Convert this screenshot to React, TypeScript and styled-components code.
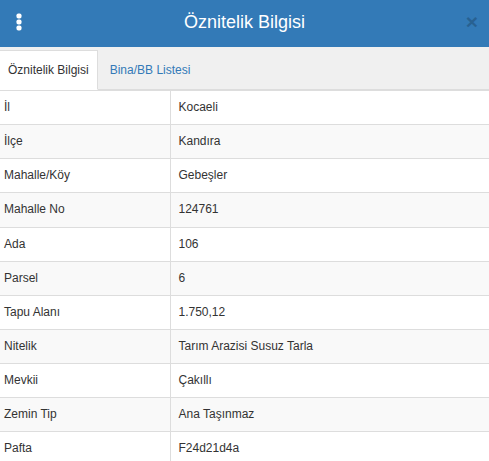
import { FC } from "react";
import styled, { createGlobalStyle } from "styled-components";

type Attribute = { label: string; value: string };

const attributes: Attribute[] = [
  { label: "İl", value: "Kocaeli" },
  { label: "İlçe", value: "Kandıra" },
  { label: "Mahalle/Köy", value: "Gebeşler" },
  { label: "Mahalle No", value: "124761" },
  { label: "Ada", value: "106" },
  { label: "Parsel", value: "6" },
  { label: "Tapu Alanı", value: "1.750,12" },
  { label: "Nitelik", value: "Tarım Arazisi Susuz Tarla" },
  { label: "Mevkii", value: "Çakıllı" },
  { label: "Zemin Tip", value: "Ana Taşınmaz" },
  { label: "Pafta", value: "F24d21d4a" },
];

const GlobalStyle = createGlobalStyle`
  body {
    margin: 0;
    font-family: "Liberation Sans", Arial, sans-serif;
    color: #333;
    background: #fff;
    overflow: hidden;
  }
`;

const App: FC = () => {
  return (
    <>
      <GlobalStyle />
      <StPanel>
        <StHeader>
          <StMenuButton aria-label="menu">
            <svg width="6" height="18" viewBox="0 0 6 18">
              <rect x="0.5" y="0.5" width="5" height="5" rx="1.8" fill="#fff" />
              <rect x="0.5" y="6.5" width="5" height="5" rx="1.8" fill="#fff" />
              <rect x="0.5" y="12.5" width="5" height="5" rx="1.8" fill="#fff" />
            </svg>
          </StMenuButton>
          <StTitle>Öznitelik Bilgisi</StTitle>
          <StClose aria-label="close">×</StClose>
        </StHeader>
        <StTabs>
          <StTab $active>Öznitelik Bilgisi</StTab>
          <StTab>Bina/BB Listesi</StTab>
        </StTabs>
        <StTable>
          <tbody>
            {attributes.map((row) => (
              <tr key={row.label}>
                <StLabelCell>{row.label}</StLabelCell>
                <StValueCell>{row.value}</StValueCell>
              </tr>
            ))}
          </tbody>
        </StTable>
      </StPanel>
    </>
  );
};

export default App;

const StPanel = styled.div`
  width: 489px;
  height: 461px;
  overflow: hidden;
  background: #fff;
`;

const StHeader = styled.div`
  display: grid;
  grid-template-columns: 40px 1fr 40px;
  align-items: center;
  height: 47px;
  background: #337ab7;
`;

const StMenuButton = styled.div`
  display: flex;
  padding-left: 16px;
  padding-bottom: 3px;
`;

const StTitle = styled.div`
  text-align: center;
  color: #fff;
  font-size: 18px;
  padding-bottom: 3px;
`;

const StClose = styled.div`
  justify-self: end;
  padding-right: 11px;
  padding-bottom: 4px;
  font-size: 21px;
  font-weight: bold;
  line-height: 1;
  color: #000;
  opacity: 0.2;
`;

const StTabs = styled.ul`
  display: flex;
  align-items: flex-end;
  list-style: none;
  margin: 0;
  padding: 0;
  height: 42px;
  background: #f0f0f0;
  border-bottom: 1px solid #ddd;
`;

const StTab = styled.li<{ $active?: boolean }>`
  display: flex;
  align-items: center;
  height: 38px;
  margin-bottom: -1px;
  margin-right: 2px;
  padding: 0 8px 0 ${({ $active }) => ($active ? "8px" : "10px")};
  font-size: 12px;
  color: ${({ $active }) => ($active ? "#333" : "#337ab7")};
  background: ${({ $active }) => ($active ? "#fff" : "transparent")};
  border: 1px solid ${({ $active }) => ($active ? "#ddd" : "transparent")};
  border-left: none;
  border-bottom-color: transparent;
  cursor: pointer;
`;

const StTable = styled.table`
  width: 100%;
  border-collapse: collapse;
  font-size: 12px;
  line-height: 1.42857;

  tr:nth-child(even) {
    background: #f9f9f9;
  }

  td {
    border-top: 1px solid #ddd;
    padding: 8px;
    vertical-align: top;
  }
`;

const StLabelCell = styled.td`
  width: 170px;
  box-sizing: border-box;
  padding-left: 4px !important;
  border-right: 1px solid #ddd;
`;

const StValueCell = styled.td``;
